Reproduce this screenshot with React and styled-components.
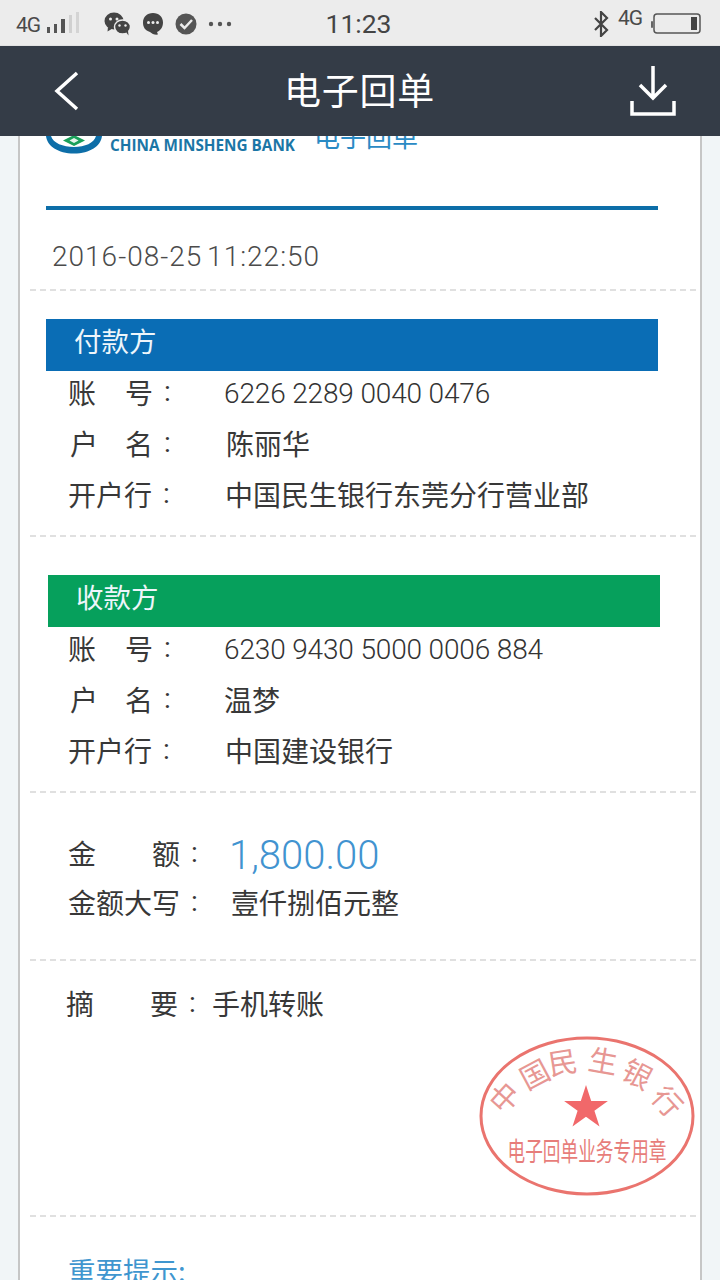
import React from 'react';
import styled, { createGlobalStyle } from 'styled-components';

const cjk = '"Noto Sans CJK SC", "Noto Sans", sans-serif';
const latin = 'Roboto, "Noto Sans CJK SC", sans-serif';

const GlobalStyle = createGlobalStyle`
  html, body {
    margin: 0;
    padding: 0;
    background: #f1f5f7;
  }
  * {
    box-sizing: border-box;
  }
`;

const Screen = styled.div`
  width: 720px;
  height: 1280px;
  overflow: hidden;
  display: flex;
  flex-direction: column;
  background: #f1f5f7;
  font-family: ${cjk};
`;

const StatusBar = styled.div`
  height: 46px;
  flex: none;
  display: grid;
  grid-template-columns: 1fr auto 1fr;
  align-items: center;
  padding: 2px 19px 0 16px;
  background: #ececec;
  border-bottom: 1px solid #e2e2e2;
  color: #444;
`;

const StatusGroup = styled.div`
  display: flex;
  align-items: center;
  gap: ${(p) => p.$gap || 8}px;
  justify-content: ${(p) => (p.$end ? 'flex-end' : 'flex-start')};
`;

const NetText = styled.span`
  font-family: ${latin};
  font-size: 21px;
  line-height: 24px;
  letter-spacing: -1px;
  color: #4a4a4a;
  margin-top: ${(p) => p.$top || 0}px;
`;

const Clock = styled.span`
  font-family: ${latin};
  font-size: 26.5px;
  color: #444;
`;

const NavBar = styled.div`
  height: 90px;
  flex: none;
  position: relative;
  z-index: 2;
  display: flex;
  align-items: center;
  justify-content: space-between;
  padding: 0 44px 0 52px;
  background: #343c47;
`;

const NavTitle = styled.div`
  margin-left: 7px;
  font-size: 37px;
  line-height: 50px;
  letter-spacing: 0.7px;
  padding-bottom: 5px;
  color: #fff;
`;

const Card = styled.div`
  flex: 1;
  position: relative;
  width: 684px;
  margin-left: 18px;
  border-left: 2px solid #c6c6c6;
  border-right: 2px solid #c6c6c6;
  background: #fff;
`;

const LogoRow = styled.div`
  height: 18px;
  overflow: hidden;
  display: flex;
  align-items: flex-end;
  margin-left: 26px;
`;

const LogoName = styled.span`
  flex: none;
  margin-left: 8px;
  font-family: "Open Sans", sans-serif;
  font-size: 15.3px;
  line-height: 18px;
  font-weight: 700;
  white-space: nowrap;
  color: #1b76a6;
`;

const LogoTitle = styled.span`
  flex: none;
  margin-left: 19px;
  margin-bottom: 5px;
  font-size: 26px;
  line-height: 26px;
  color: #2a8ac4;
`;

const Rule = styled.div`
  height: 4px;
  margin: 52px 42px 0 26px;
  background: #0d6ea8;
`;

const DateLine = styled.div`
  height: 79px;
  padding: 27px 0 0 32px;
  font-family: ${latin};
  font-size: 28px;
  line-height: 40px;
  font-weight: 300;
  letter-spacing: 1px;
  word-spacing: -3px;
  color: #4b4b4b;
`;

const Dashes = styled.div`
  height: 2px;
  margin-left: 10px;
  margin-right: 4px;
  border-top: 2px dashed #e0e0e0;
`;

const Banner = styled.div`
  height: 52px;
  width: 612px;
  margin-left: ${(p) => p.$shift + 26}px;
  margin-top: ${(p) => p.$top}px;
  padding-left: 28px;
  font-size: 27.5px;
  line-height: 42px;
  color: #eef6fb;
  background: ${(p) => p.$color};
`;

const Rows = styled.div`
  display: flex;
  flex-direction: column;
  gap: ${(p) => p.$gap}px;
  padding-bottom: 18px;
`;

const Row = styled.div`
  height: 44px;
  display: flex;
  align-items: center;
  padding-left: ${(p) => p.$left || 48}px;
  font-size: 28px;
  color: #383838;
`;

const LabelText = styled.div`
  width: ${(p) => p.$width}px;
  flex: none;
  display: flex;
  justify-content: space-between;
  padding-left: ${(p) => p.$indent || 0}px;
  padding-bottom: 3px;
`;

const Colon = styled.span`
  flex: none;
  width: ${(p) => p.$width}px;
  padding-left: 11px;
  padding-bottom: 3px;
  font-family: ${latin};
`;

const Value = styled.span`
  padding-bottom: 3px;
  white-space: nowrap;
`;

const Digits = styled.span`
  font-family: ${latin};
  font-weight: 300;
  font-size: 28px;
  letter-spacing: -0.15px;
  color: #333;
`;

const Amount = styled.span`
  padding-top: 2px;
  font-family: ${latin};
  font-weight: 300;
  font-size: 40px;
  color: #4193d0;
`;

const Block = styled.div`
  height: ${(p) => p.$height}px;
  padding-top: ${(p) => p.$top}px;
`;

const Tip = styled.div`
  padding: 35px 0 0 48px;
  font-size: 27.5px;
  line-height: 36px;
  color: #3f96cf;
`;

const StampMark = styled.svg`
  position: absolute;
  left: 455px;
  top: 900px;
  opacity: 0.9;
`;

const Signal = () => (
  <svg width="37" height="24" viewBox="0 0 37 24">
    <rect x="1" y="15" width="3" height="6" fill="#555" />
    <rect x="8" y="12" width="3" height="9" fill="#555" />
    <rect x="15" y="7" width="4" height="14" fill="#555" />
    <rect x="23" y="3" width="3" height="18" fill="#d0d0d0" />
    <rect x="30" y="0" width="3" height="21" fill="#d4d4d4" />
  </svg>
);

const WeChat = () => (
  <svg width="27" height="24" viewBox="0 0 27 24">
    <ellipse cx="10" cy="9" rx="9.500" ry="8.500" fill="#444" />
    <path d="M4 15l-.5 4.500 5-3z" fill="#444" />
    <ellipse cx="18.500" cy="15" rx="8" ry="7" fill="#444" stroke="#ececec" strokeWidth="1.500" />
    <path d="M22 20l2.500 3.500-.5-5z" fill="#444" />
    <circle cx="6.500" cy="7" r="1.500" fill="#ececec" />
    <circle cx="13" cy="7" r="1.500" fill="#ececec" />
    <circle cx="15.500" cy="13.500" r="1.200" fill="#ececec" />
    <circle cx="21.500" cy="13.500" r="1.200" fill="#ececec" />
  </svg>
);

const Bubble = () => (
  <svg width="22" height="23" viewBox="0 0 22 23">
    <path d="M11 1c6 0 10 4 10 9.500 0 5-3 8.500-6 9.500l1 2.500c-3 .5-6-.5-8-2.500C3 18.500 1 15 1 10.500 1 5 5 1 11 1z" fill="#444" />
    <circle cx="6.500" cy="10.500" r="1.500" fill="#ececec" />
    <circle cx="11" cy="10.500" r="1.500" fill="#ececec" />
    <circle cx="15.500" cy="10.500" r="1.500" fill="#ececec" />
  </svg>
);

const Check = () => (
  <svg width="22" height="22" viewBox="0 0 22 22">
    <circle cx="11" cy="11" r="10.500" fill="#555" />
    <path d="M5.500 11l4 4 7.500-8" fill="none" stroke="#ececec" strokeWidth="2.500" />
  </svg>
);

const More = () => (
  <svg width="24" height="6" viewBox="0 0 24 6">
    <circle cx="3" cy="3" r="2.200" fill="#555" />
    <circle cx="12" cy="3" r="2.200" fill="#555" />
    <circle cx="21" cy="3" r="2.200" fill="#555" />
  </svg>
);

const Bluetooth = () => (
  <svg width="16" height="26" viewBox="0 0 16 26">
    <path d="M2 7l12 12-6 6V1l6 6L2 19" fill="none" stroke="#444" strokeWidth="2.200" />
  </svg>
);

const Battery = () => (
  <svg width="50" height="22" viewBox="0 0 50 22">
    <rect x="0" y="8" width="2" height="7" rx="1" fill="#666" />
    <rect x="3" y="1" width="46" height="19" rx="3" fill="none" stroke="#555" strokeWidth="1.500" />
    <rect x="40" y="4" width="6" height="13" fill="#444" />
  </svg>
);

const Back = () => (
  <svg width="30" height="42" viewBox="0 0 30 42">
    <path d="M25 3L5 21l20 18" fill="none" stroke="#fff" strokeWidth="3.500" />
  </svg>
);

const Download = () => (
  <svg width="46" height="52" viewBox="0 0 46 52">
    <path d="M23 1v31M10 20l13 13 13-13M2 36v13h42V36" fill="none" stroke="#fff" strokeWidth="3.500" />
  </svg>
);

const LogoMark = () => (
  <svg width="56" height="18" viewBox="0 0 56 18" style={{ flex: 'none' }}>
    <path d="M0 0c1 10 12 17.500 28 17.500S55 10 56 0H50c-2 7-11 11-22 11S7 7 5 0z" fill="#0d6ea8" />
    <path d="M28 -1l11 5.500-11 5.500-11-5.500z" fill="#1aa05a" />
    <path d="M28 2l4.500 2.500-4.500 2.500-4.500-2.500z" fill="#e8f5ec" />
  </svg>
);

const sealGlyphs = [
  ['中', 30, 62, -48],
  ['国', 60, 39, -28],
  ['民', 88, 27, -9],
  ['生', 128, 26, 10],
  ['银', 162, 39, 28],
  ['行', 192, 66, 48],
];

const Stamp = () => (
  <StampMark width="224" height="170" viewBox="0 0 224 170">
    <ellipse cx="112" cy="80" rx="106" ry="78" fill="none" stroke="#e8655f" strokeWidth="3" />
    {sealGlyphs.map(([ch, x, y, angle]) => (
      <text
        key={ch}
        x="0"
        y="10"
        fill="#e58c88"
        fontSize="29"
        fontFamily={cjk}
        textAnchor="middle"
        transform={`translate(${x} ${y}) rotate(${angle})`}
      >
        {ch}
      </text>
    ))}
    <path
      d="M111 49l5.200 15.900 16.700 0-13.500 9.800 5.100 15.900-13.500-9.800-13.500 9.800 5.100-15.900-13.500-9.800 16.700 0z"
      fill="#f0585a"
    />
    <text
      x="112"
      y="125"
      fill="#e5706c"
      fontSize="26"
      fontFamily={cjk}
      textAnchor="middle"
      textLength="159"
      lengthAdjust="spacingAndGlyphs"
    >
      电子回单业务专用章
    </text>
  </StampMark>
);

const Label = ({ chars, width, indent, colonWidth }) => (
  <>
    <LabelText $width={width} $indent={indent}>
      {chars.map((ch) => (
        <span key={ch}>{ch}</span>
      ))}
    </LabelText>
    <Colon $width={colonWidth}>:</Colon>
  </>
);

const Party = ({ title, color, shift, top, account, name, nameGap, bank }) => (
  <>
    <Banner $color={color} $shift={shift} $top={top}>{title}</Banner>
    <Rows $gap={7}>
      <Row>
        <Label chars={['账', '号']} width={85} colonWidth={71} />
        <Digits>{account}</Digits>
      </Row>
      <Row>
        <Label chars={['户', '名']} width={85} indent={2} colonWidth={nameGap} />
        <Value>{name}</Value>
      </Row>
      <Row>
        <Label chars={['开', '户', '行']} width={84} colonWidth={73} />
        <Value>{bank}</Value>
      </Row>
    </Rows>
  </>
);

export default function App() {
  return (
    <Screen>
      <GlobalStyle />
      <StatusBar>
        <StatusGroup $gap={21}>
          <StatusGroup $gap={6}>
            <NetText $top={3}>4G</NetText>
            <Signal />
          </StatusGroup>
          <StatusGroup $gap={11}>
            <WeChat />
            <Bubble />
            <Check />
            <More />
          </StatusGroup>
        </StatusGroup>
        <Clock>11:23</Clock>
        <StatusGroup $end $gap={9}>
          <Bluetooth />
          <NetText $top={-11}>4G</NetText>
          <Battery />
        </StatusGroup>
      </StatusBar>
      <NavBar>
        <Back />
        <NavTitle>电子回单</NavTitle>
        <Download />
      </NavBar>
      <Card>
        <LogoRow>
          <LogoMark />
          <LogoName>CHINA MINSHENG BANK</LogoName>
          <LogoTitle>电子回单</LogoTitle>
        </LogoRow>
        <Rule />
        <DateLine>2016-08-25 11:22:50</DateLine>
        <Dashes />
        <Party
          title="付款方"
          color="#0a6db5"
          shift={0}
          top={28}
          account="6226 2289 0040 0476"
          name="陈丽华"
          nameGap={73}
          bank="中国民生银行东莞分行营业部"
        />
        <Dashes />
        <Party
          title="收款方"
          color="#06a05c"
          shift={2}
          top={38}
          account="6230 9430 5000 0006 884"
          name="温梦"
          nameGap={71}
          bank="中国建设银行"
        />
        <Dashes />
        <Block $height={166} $top={39}>
          <Rows $gap={5}>
            <Row>
              <Label chars={['金', '额']} width={112} colonWidth={49} />
              <Amount>1,800.00</Amount>
            </Row>
            <Row>
              <Label chars={['金', '额', '大', '写']} width={112} colonWidth={51} />
              <Value>壹仟捌佰元整</Value>
            </Row>
          </Rows>
        </Block>
        <Dashes />
        <Block $height={254} $top={21}>
          <Row $left={46}>
            <Label chars={['摘', '要']} width={112} colonWidth={34} />
            <Value>手机转账</Value>
          </Row>
        </Block>
        <Dashes />
        <Tip>重要提示:</Tip>
        <Stamp />
      </Card>
    </Screen>
  );
}
